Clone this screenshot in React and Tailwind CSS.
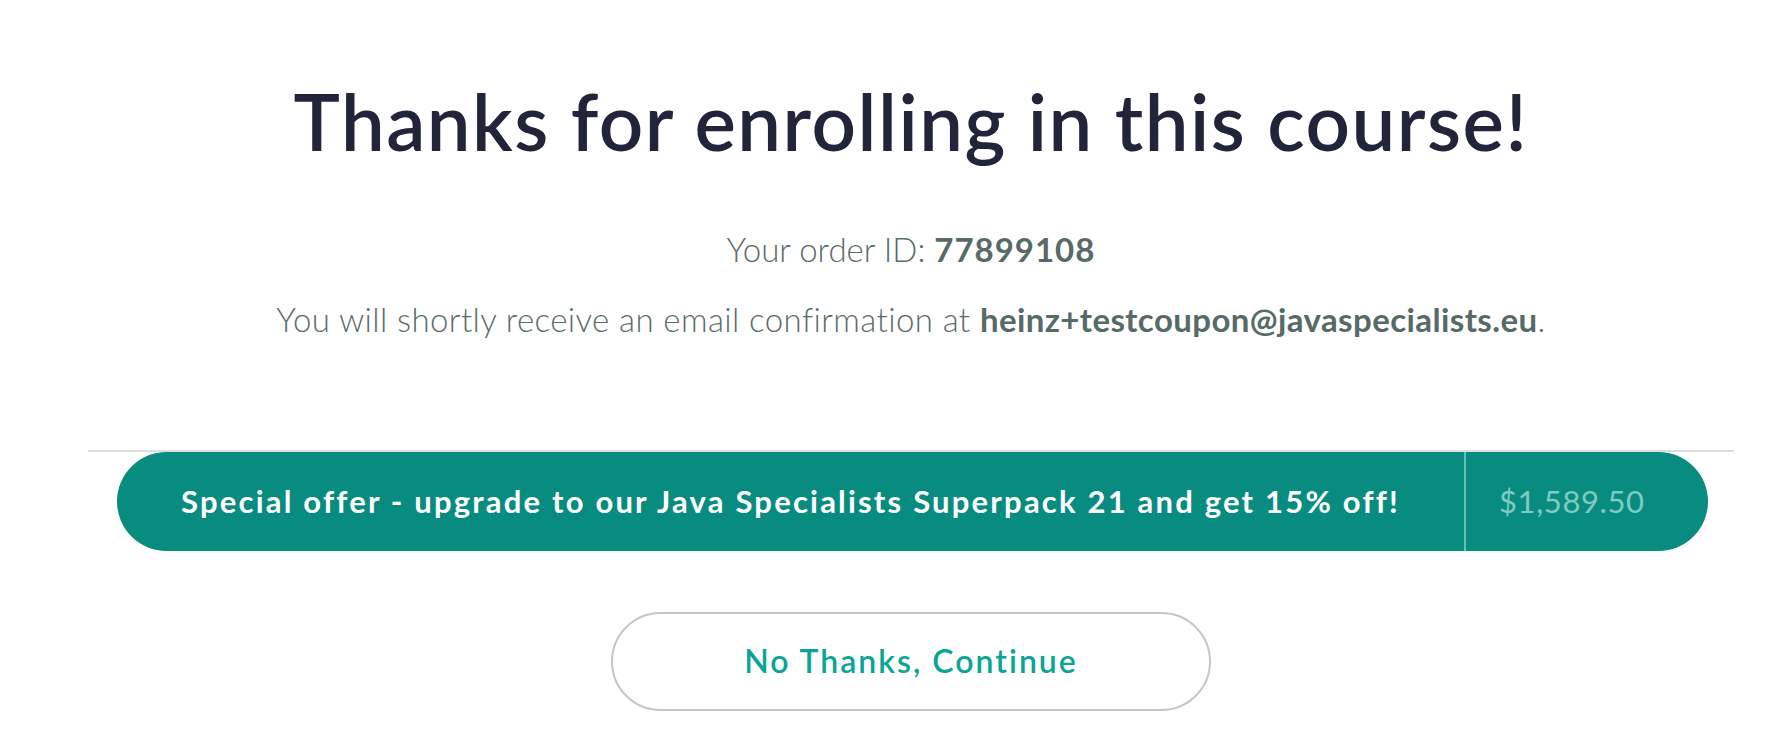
export default function App() {
  return (
    <div className="min-h-screen w-full bg-white font-['Lato','Open_Sans',sans-serif]">
      <div className="ml-[88px] w-[1646px] pt-[75px] flex flex-col items-center">
        {/* Heading */}
        <h1 className="text-[78px] leading-[1.2] font-semibold text-[#22253a] tracking-[1.5px]">
          Thanks for enrolling in this course!
        </h1>

        {/* Order details */}
        <p className="mt-[61px] text-[33px] leading-[1.2] font-light text-[#5a6c69]">
          Your order ID: <span className="font-bold text-[#566b67] tracking-[1px]">77899108</span>
        </p>
        <p className="mt-[31px] text-[33px] leading-[1.2] font-light text-[#5a6c69] tracking-[0.4px]">
          You will shortly receive an email confirmation at{' '}
          <span className="font-bold text-[#566b67]">heinz+testcoupon@javaspecialists.eu</span>.
        </p>

        {/* Offer */}
        <div className="mt-[110px] w-full border-t-2 border-[#dedede]" />
        <div className="w-full pl-[29px] pr-[26px]">
          <button className="w-full h-[99px] rounded-full bg-[#098c80] flex items-stretch overflow-hidden">
            <span className="flex-1 flex items-center justify-center text-[31px] font-bold text-white tracking-[2.2px]">
              Special offer - upgrade to our Java Specialists Superpack 21 and get 15% off!
            </span>
            <span className="w-[2px] bg-[#6cbdb4]" />
            <span className="w-[242px] flex items-center pl-[33px] text-[31px] font-normal text-[#7fcbc2] tracking-[0.6px]">
              $1,589.50
            </span>
          </button>
        </div>

        {/* Decline */}
        <button className="mt-[61px] w-[600px] h-[99px] rounded-full border-2 border-[#c3c7ca] bg-white text-[32px] font-semibold text-[#0aa596] tracking-[2px]">
          No Thanks, Continue
        </button>
      </div>
    </div>
  )
}
